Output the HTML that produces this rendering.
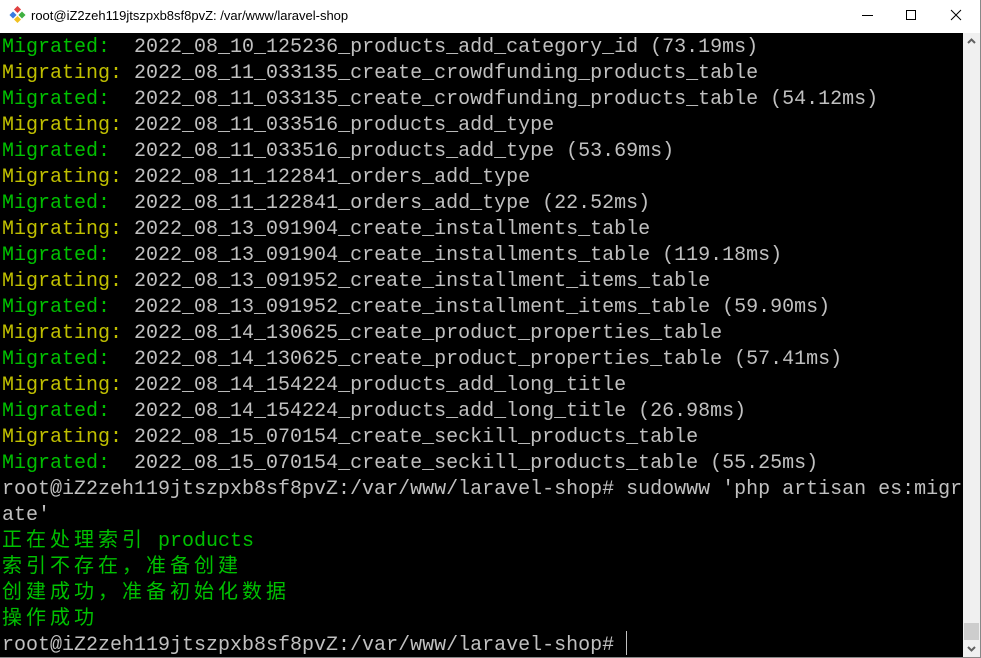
<!DOCTYPE html>
<html><head><meta charset="utf-8"><style>
*{margin:0;padding:0;box-sizing:border-box}
body{width:981px;height:658px;background:#fff;position:relative;overflow:hidden;font-family:"Liberation Sans",sans-serif}
.tb{position:absolute;left:0;top:0;width:981px;height:33px;background:#fff}
.title{position:absolute;left:31px;top:8px;font-size:13px;color:#000}
.term{position:absolute;left:0;top:33px;width:963px;height:624px;background:#000;overflow:hidden}
pre{position:absolute;left:2px;top:2px;font-family:"Liberation Mono","Noto Sans CJK SC",monospace;font-size:20px;line-height:26px;color:#c0c0c0;white-space:pre}
.g{color:#00c000}.y{color:#c0c000}
.c{letter-spacing:4px}
.sb{position:absolute;left:963px;top:33px;width:17px;height:624px;background:#f0f0f0}
.bd{position:absolute;background:#888}
</style></head><body>
<div class="tb">
<svg style="position:absolute;left:9px;top:6px" width="18" height="18" viewBox="0 0 18 18">
<rect x="6" y="1" width="5" height="5" fill="#e04040" transform="rotate(45 8.5 3.5)"/>
<rect x="1.5" y="6.5" width="5" height="5" fill="#3a7be0" transform="rotate(45 4 9)"/>
<rect x="10.5" y="6.5" width="5" height="5" fill="#40b040" transform="rotate(45 13 9)"/>
<rect x="6" y="11" width="5" height="5" fill="#f0c020" transform="rotate(45 8.5 13.5)"/>
</svg>
<div class="title">root@iZ2zeh119jtszpxb8sf8pvZ: /var/www/laravel-shop</div>
<div style="position:absolute;left:862px;top:15px;width:11px;height:1px;background:#000"></div>
<div style="position:absolute;left:906px;top:10px;width:10px;height:10px;border:1px solid #000"></div>
<svg style="position:absolute;left:950px;top:9px" width="12" height="12"><path d="M1 1L11 11M11 1L1 11" stroke="#000" stroke-width="1"/></svg>
</div>
<div class="term"><pre><span class="g">Migrated:  </span>2022_08_10_125236_products_add_category_id (73.19ms)
<span class="y">Migrating: </span>2022_08_11_033135_create_crowdfunding_products_table
<span class="g">Migrated:  </span>2022_08_11_033135_create_crowdfunding_products_table (54.12ms)
<span class="y">Migrating: </span>2022_08_11_033516_products_add_type
<span class="g">Migrated:  </span>2022_08_11_033516_products_add_type (53.69ms)
<span class="y">Migrating: </span>2022_08_11_122841_orders_add_type
<span class="g">Migrated:  </span>2022_08_11_122841_orders_add_type (22.52ms)
<span class="y">Migrating: </span>2022_08_13_091904_create_installments_table
<span class="g">Migrated:  </span>2022_08_13_091904_create_installments_table (119.18ms)
<span class="y">Migrating: </span>2022_08_13_091952_create_installment_items_table
<span class="g">Migrated:  </span>2022_08_13_091952_create_installment_items_table (59.90ms)
<span class="y">Migrating: </span>2022_08_14_130625_create_product_properties_table
<span class="g">Migrated:  </span>2022_08_14_130625_create_product_properties_table (57.41ms)
<span class="y">Migrating: </span>2022_08_14_154224_products_add_long_title
<span class="g">Migrated:  </span>2022_08_14_154224_products_add_long_title (26.98ms)
<span class="y">Migrating: </span>2022_08_15_070154_create_seckill_products_table
<span class="g">Migrated:  </span>2022_08_15_070154_create_seckill_products_table (55.25ms)
root@iZ2zeh119jtszpxb8sf8pvZ:/var/www/laravel-shop# sudowww 'php artisan es:migr
ate'
<span class="g"><span class="c">正在处理索引</span> products</span>
<span class="g c">索引不存在，准备创建</span>
<span class="g c">创建成功，准备初始化数据</span>
<span class="g c">操作成功</span>
root@iZ2zeh119jtszpxb8sf8pvZ:/var/www/laravel-shop# </pre>
<div style="position:absolute;left:626px;top:598px;width:1px;height:24px;background:#c0c0c0"></div>
</div>
<div class="sb">
<svg style="position:absolute;left:4px;top:5px" width="9" height="6"><path d="M1 5L4.5 1.5L8 5" stroke="#606060" stroke-width="2" fill="none"/></svg>
<div style="position:absolute;left:1px;top:590px;width:15px;height:17px;background:#cdcdcd"></div>
<svg style="position:absolute;left:4px;top:613px" width="9" height="6"><path d="M1 1L4.5 4.5L8 1" stroke="#606060" stroke-width="2" fill="none"/></svg>
</div>
<div class="bd" style="left:980px;top:0;width:1px;height:658px"></div>
<div class="bd" style="left:0;top:657px;width:981px;height:1px"></div>
</body></html>
